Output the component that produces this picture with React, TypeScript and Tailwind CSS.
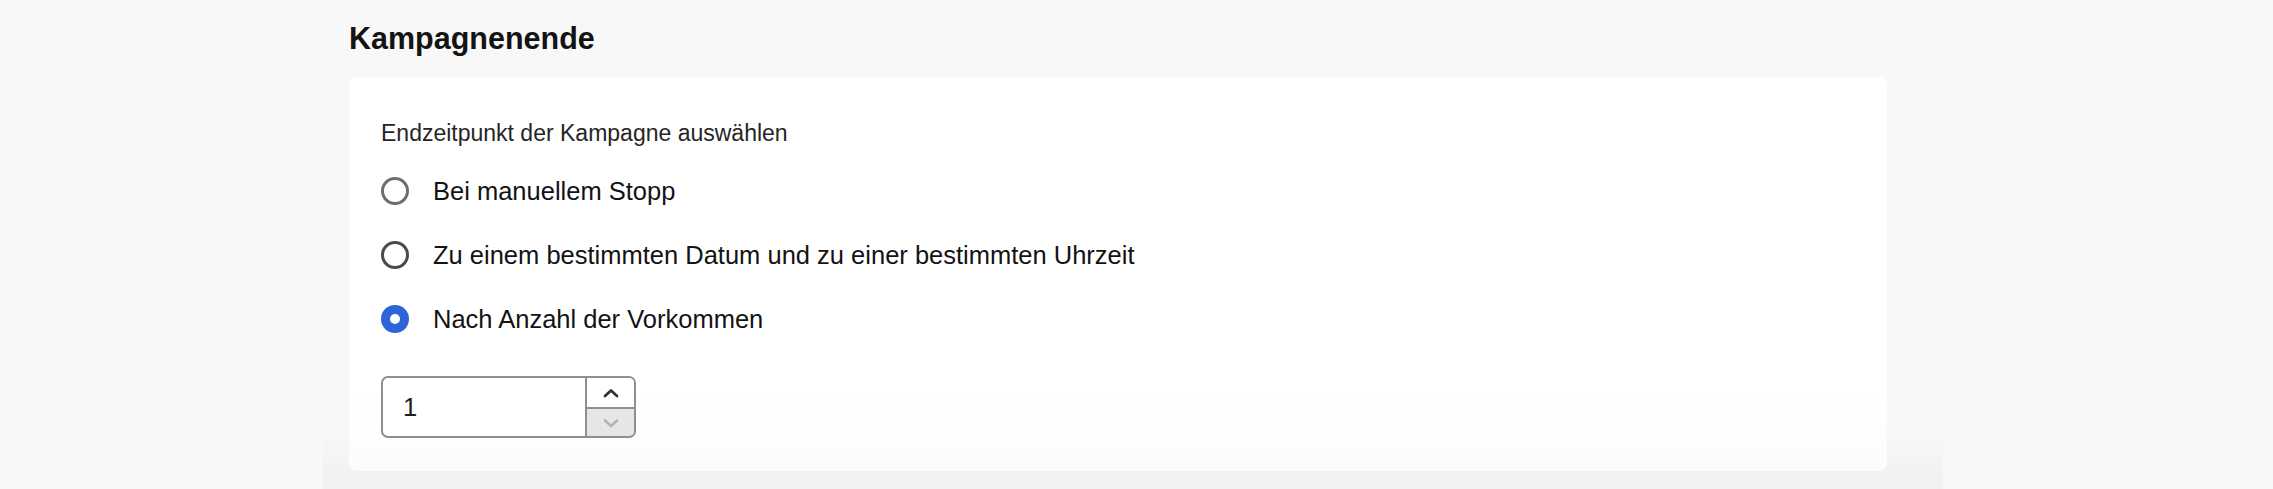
import React from "react";

const font = { fontFamily: '"Liberation Sans", Arial, sans-serif' };

function Radio({ state }: { state: "light" | "dark" | "checked" }) {
  if (state === "checked") {
    return (
      <span className="flex h-[28px] w-[28px] shrink-0 items-center justify-center rounded-full bg-[#2d64d7]">
        <span className="h-[10px] w-[10px] rounded-full bg-white" />
      </span>
    );
  }
  return (
    <span
      className={
        state === "light"
          ? "h-[28px] w-[28px] shrink-0 rounded-full border-[3px] border-[#6e6e6e] bg-white"
          : "h-[28px] w-[28px] shrink-0 rounded-full border-[3px] border-[#4a4a4a] bg-white"
      }
    />
  );
}

export default function App() {
  const options: { label: string; state: "light" | "dark" | "checked" }[] = [
    { label: "Bei manuellem Stopp", state: "light" },
    { label: "Zu einem bestimmten Datum und zu einer bestimmten Uhrzeit", state: "dark" },
    { label: "Nach Anzahl der Vorkommen", state: "checked" },
  ];
  return (
    <div className="h-[489px] w-full overflow-hidden bg-[#f8f8f8]" style={font}>
      <div className="ml-[323px] h-[489px] w-[1620px] bg-[linear-gradient(to_bottom,#f8f8f8_0%,#f8f8f8_88%,#f2f2f2_97%,#f2f2f2_100%)] px-[26px] pt-[20px]">
        <h1 className="m-0 mb-[21px] text-[30.5px] font-bold leading-[36px] text-[#131313]">Kampagnenende</h1>
        <div className="flex h-[394px] w-[1538px] flex-col rounded-[8px] bg-[linear-gradient(to_bottom,#ffffff_0%,#ffffff_80%,#fcfcfc_100%)] pl-[32px] pt-[42px]">
          <div className="text-[23px] leading-[28px] text-[#252525]">Endzeitpunkt der Kampagne auswählen</div>
          <div className="mt-[12px] flex flex-col">
            {options.map((o) => (
              <div key={o.label} className="flex h-[64px] items-center gap-[24px]">
                <Radio state={o.state} />
                <span className="text-[25.5px] leading-[64px] text-[#131313]">{o.label}</span>
              </div>
            ))}
          </div>
          <div className="mt-[25px] flex h-[62px] w-[255px] overflow-hidden rounded-[7px] border-2 border-[#8f8f8f] bg-white">
            <div className="flex flex-1 items-center pl-[20px] text-[25.5px] text-[#1d1d1d]">1</div>
            <div className="flex w-[49px] flex-col border-l-2 border-[#8f8f8f]">
              <div className="flex h-[31px] items-center justify-center border-b-2 border-[#8f8f8f] bg-white">
                <svg width="16" height="10" viewBox="0 0 16 10" fill="none">
                  <path d="M2 8 L8 2.5 L14 8" stroke="#333333" strokeWidth="2.8" strokeLinecap="round" strokeLinejoin="round" />
                </svg>
              </div>
              <div className="flex flex-1 items-center justify-center bg-[#e6e6e6]">
                <svg width="16" height="10" viewBox="0 0 16 10" fill="none">
                  <path d="M2 2.5 L8 8 L14 2.5" stroke="#b3b3b3" strokeWidth="2.6" strokeLinecap="round" strokeLinejoin="round" />
                </svg>
              </div>
            </div>
          </div>
        </div>
      </div>
    </div>
  );
}
